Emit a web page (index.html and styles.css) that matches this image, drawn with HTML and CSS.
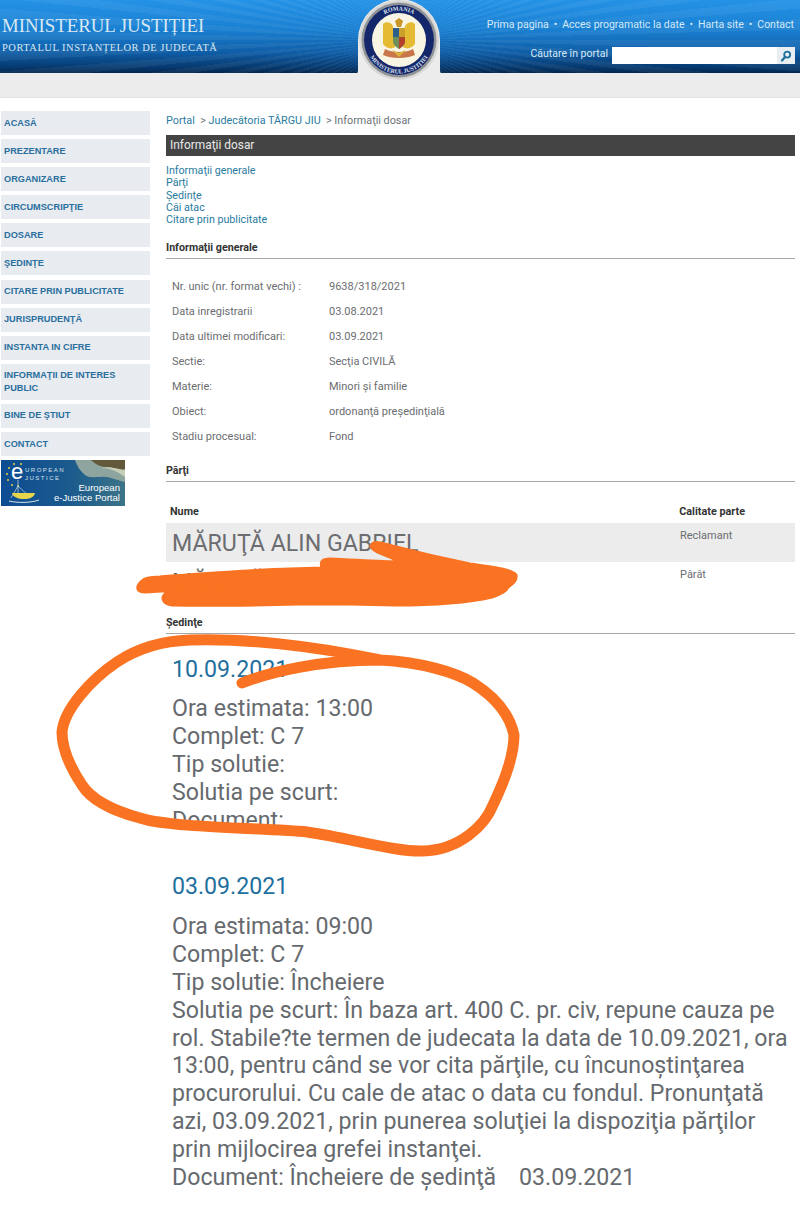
FILE: index.html
```html
<!DOCTYPE html>
<html lang="ro">
<head>
  <meta charset="UTF-8">
  <title>Informații dosar</title>
  <meta name="viewport" content="width=device-width, initial-scale=1.0">
  <link rel="stylesheet" href="styles.css">
</head>
<body>

  <header class="site-header">
    <div class="banner">
      <div class="brand">
        <div class="brand-title">MINISTERUL JUSTIȚIEI</div>
        <div class="brand-sub">PORTALUL INSTANȚELOR DE JUDECATĂ</div>
      </div>
      <div class="banner-right">
        <nav class="top-links">
          <a>Prima pagina</a><span>•</span><a>Acces programatic la date</a><span>•</span><a>Harta site</a><span>•</span><a>Contact</a>
        </nav>
        <div class="search-row">
          <span>Căutare în portal</span>
          <div class="search-box">
            <div class="search-btn">
              <svg width="12" height="12" viewBox="0 0 12 12"><circle cx="7.2" cy="4.6" r="3" fill="none" stroke="#1f6e9c" stroke-width="1.8"/><path d="M5 7L2 10.5" stroke="#1f6e9c" stroke-width="2.2" stroke-linecap="round"/></svg>
            </div>
          </div>
        </div>
      </div>
    </div>
    <div class="seal">
      <svg width="90" height="84" viewBox="0 0 90 84">
        <path d="M0 74Q3 74 3 70V40A41 41 0 0 1 85 40V70Q85 74 88 74z" fill="#ececec"/>
        <circle cx="44" cy="40" r="40" fill="#d8d9d6"/>
        <circle cx="44" cy="40" r="37.5" fill="#8f9296"/>
        <circle cx="44" cy="40" r="35" fill="#14276b"/>
        <circle cx="44" cy="40" r="27" fill="#f9f5e4"/>
        <!-- eagle wings, head, shield and ribbon -->
        <path d="M28 24c3-3 8-2 10 2l2 21c-4 3-9 1-12-3z" fill="#e6bb34"/>
        <path d="M60 24c-3-3-8-2-10 2l-2 21c4 3 9 1 12-3z" fill="#e6bb34"/>
        <path d="M40 21l4-3 4 3-2 6h-4z" fill="#c9962a"/>
        <path d="M38 28h12v13c0 4-3 6-6 8-3-2-6-4-6-8z" fill="#6f8f5a"/>
        <path d="M38 28h6v9h-6z" fill="#2d5f8a"/>
        <path d="M44 37h6v5c0 2-3 5-6 7z" fill="#b3402c"/>
        <path d="M44 28h6v9h-6z" fill="#c9a12a"/>
        <path d="M30 49c6 4 22 4 28 0l2 6c-8 4-24 4-32 0z" fill="#c9764a"/>
        <path d="M37 50l7 7 7-7-7 3z" fill="#d9b53c"/>
        <path id="sealTop" d="M14.5 40a29.5 29.5 0 0 1 59 0" fill="none"/>
        <text class="seal-text" text-anchor="middle"><textPath href="#sealTop" startOffset="50%">ROMANIA</textPath></text>
        <path id="sealBottom" d="M10.5 40a33.5 33.5 0 0 0 67 0" fill="none"/>
        <text class="seal-text" text-anchor="middle"><textPath href="#sealBottom" startOffset="50%">MINISTERUL JUSTIȚIEI</textPath></text>
      </svg>
    </div>
  </header>

  <div class="page">
    <aside class="sidebar">
      <a class="side-item">ACASĂ</a>
      <a class="side-item">PREZENTARE</a>
      <a class="side-item">ORGANIZARE</a>
      <a class="side-item">CIRCUMSCRIPŢIE</a>
      <a class="side-item">DOSARE</a>
      <a class="side-item">ŞEDINŢE</a>
      <a class="side-item">CITARE PRIN PUBLICITATE</a>
      <a class="side-item">JURISPRUDENŢĂ</a>
      <a class="side-item">INSTANTA IN CIFRE</a>
      <a class="side-item tall">INFORMAŢII DE INTERES PUBLIC</a>
      <a class="side-item">BINE DE ŞTIUT</a>
      <a class="side-item">CONTACT</a>
      <div class="ejustice">
        <svg class="ejustice-art" width="124" height="46" viewBox="0 0 124 46">
          <defs>
            <linearGradient id="ejBg" x1="0" y1="0" x2="1" y2="0">
              <stop offset="0" stop-color="#0d4c92"/>
              <stop offset="0.55" stop-color="#1b5a8c"/>
              <stop offset="1" stop-color="#3c7488"/>
            </linearGradient>
          </defs>
          <rect width="124" height="46" fill="url(#ejBg)"/>
          <path d="M74 0h50v22c-10-2-16-6-24-5-8 0-12 1-16-2-5-4-8-9-10-15z" fill="#8ea59f"/>
          <path d="M90 0h34v9c-6 3-11 0-15-2-7 1-14-2-19-7z" fill="#62583a"/>
          <path d="M100 8c8 0 16 3 24 9v-7c-8-1-16-4-24-2z" fill="#c7ceb8"/>
          <g fill="#f0d23c">
            <circle cx="6" cy="14" r="1"/><circle cx="8" cy="8" r="1"/><circle cx="13" cy="4" r="1"/>
            <circle cx="20" cy="4" r="1"/><circle cx="7" cy="20" r="1"/><circle cx="11" cy="25" r="1"/>
            <circle cx="17" cy="26" r="1"/>
          </g>
          <path d="M17 26L10 38M17 26L30 38M17 20V36" stroke="#c9dbe6" stroke-width=".7" fill="none"/>
          <path d="M11 33h23c-1 4-5 6-11 6s-11-2-12-6z" fill="#e8d54a"/>
          <path d="M8 41c8 2 22 2 30-1" stroke="#d7e4ea" fill="none"/>
        </svg>
        <span class="ej-e">e</span>
        <span class="ej-small">UROPEAN<br>JUSTICE</span>
        <span class="ej-label">European<br>e-Justice Portal</span>
      </div>
    </aside>

    <main class="content">
      <div class="breadcrumb"><a>Portal</a> &nbsp;&gt; <a>Judecătoria TÂRGU JIU</a> &nbsp;&gt; Informaţii dosar</div>
      <h1 class="title-bar">Informaţii dosar</h1>

      <div class="anchors">
        <a>Informaţii generale</a>
        <a>Părţi</a>
        <a>Şedinţe</a>
        <a>Căi atac</a>
        <a>Citare prin publicitate</a>
      </div>

      <h2 class="section-head first">Informaţii generale</h2>
      <dl class="info">
        <div class="info-row"><dt>Nr. unic (nr. format vechi) :</dt><dd>9638/318/2021</dd></div>
        <div class="info-row"><dt>Data inregistrarii</dt><dd>03.08.2021</dd></div>
        <div class="info-row"><dt>Data ultimei modificari:</dt><dd>03.09.2021</dd></div>
        <div class="info-row"><dt>Sectie:</dt><dd>Secţia CIVILĂ</dd></div>
        <div class="info-row"><dt>Materie:</dt><dd>Minori şi familie</dd></div>
        <div class="info-row"><dt>Obiect:</dt><dd>ordonanţă preşedinţială</dd></div>
        <div class="info-row"><dt>Stadiu procesual:</dt><dd>Fond</dd></div>
      </dl>

      <h2 class="section-head">Părţi</h2>
      <div class="party-head"><span>Nume</span><span>Calitate parte</span></div>
      <div class="party-row shaded"><span class="party-name">MĂRUŢĂ ALIN GABRIEL</span><span class="party-role">Reclamant</span></div>
      <div class="party-row"><span class="party-name">MĂRUŢĂ</span><span class="party-role">Pârât</span></div>

      <h2 class="section-head hearings">Şedinţe</h2>

      <section class="hearing">
        <div class="hearing-date">10.09.2021</div>
        <p>Ora estimata: 13:00<br>Complet: C 7<br>Tip solutie:<br>Solutia pe scurt:<br>Document:</p>
      </section>

      <section class="hearing second">
        <div class="hearing-date">03.09.2021</div>
        <p>Ora estimata: 09:00<br>Complet: C 7<br>Tip solutie: Încheiere<br>Solutia pe scurt: În baza art. 400 C. pr. civ, repune cauza pe rol. Stabile?te termen de judecata la data de 10.09.2021, ora 13:00, pentru când se vor cita părţile, cu încunoştinţarea procurorului. Cu cale de atac o data cu fondul. Pronunţată azi, 03.09.2021, prin punerea soluţiei la dispoziţia părţilor prin mijlocirea grefei instanţei.<br>Document: Încheiere de şedinţă &nbsp;&nbsp; 03.09.2021</p>
      </section>
    </main>
  </div>

  <!-- marker scribbles on top of the photo -->
  <svg class="scribble" width="800" height="1207" viewBox="0 0 800 1207">
    <path class="marker-line" d="M242 683C270 672 320 660 380 660C420 662 455 672 473 683C495 697 510 715 514 735C514 760 500 790 493 805C485 825 460 850 423 851C395 852 350 838 307 832C270 828 170 828 140 818C110 810 90 798 82 785C72 770 62 750 62 732C64 710 90 680 117 662C135 650 160 641 190 640C240 638 310 645 380 660"/>
    <path class="marker-blob" d="M138 586C142 578 150 577 160 577C200 574 250 570 290 569L322 568C320 562 322 559 330 559C355 560 380 562 400 562C390 556 372 552 371 546C373 541 380 542 392 546C415 552 440 558 470 564C490 567 512 569 516 575C517 581 512 584 508 587C506 592 500 594 492 597C470 602 440 605 395 605L350 604L300 604C260 605 220 606 172 605C163 604 161 598 165 594C175 591 200 590 225 589C195 589 165 591 145 592C139 592 137 590 138 586z"/>
  </svg>

</body>
</html>
```

FILE: styles.css
```css
* { box-sizing: border-box; margin: 0; padding: 0; }

body {
  background: #fff;
  color: #6b6d70;
  font-family: Roboto, "Liberation Sans", sans-serif;
  font-size: 11px;
  position: relative;
  width: 800px;
  height: 1207px;
  overflow: hidden;
}

/* header */
.site-header { position: relative; height: 98px; background: #ececec; border-bottom: 1px solid #e2e2e2; }

.banner {
  height: 73px;
  display: flex;
  justify-content: space-between;
  background:
    repeating-conic-gradient(from 0deg at 400px 40px, rgba(255, 255, 255, 0.05) 0 1.5deg, rgba(255, 255, 255, 0) 1.5deg 3deg),
    linear-gradient(180deg, #2492e6 0%, #1a80d2 40%, #0f5da6 72%, #063a70 92%, #04264d 100%);
}

.brand { padding: 15px 0 0 2px; color: #d8e8f2; font-family: "Liberation Serif", serif; }
.brand-title { font-size: 18.8px; line-height: 22px; }
.brand-sub { font-size: 10.5px; letter-spacing: 0.5px; line-height: 14px; margin-top: 4px; }

.banner-right { padding: 18px 6px 0 0; color: #d5e9f6; display: flex; flex-direction: column; align-items: flex-end; font-size: 10.5px; }
.top-links { display: flex; gap: 5px; line-height: 14px; }
.search-row { display: flex; align-items: flex-start; gap: 4px; margin-top: 15px; line-height: 14px; }
.search-box { width: 183px; height: 17px; background: #fff; display: flex; justify-content: flex-end; margin-right: -1px; }
.search-btn { width: 18px; background: #e8eef2; display: flex; align-items: center; justify-content: center; }

.seal { position: absolute; left: 355px; top: 0; width: 90px; height: 84px; }
.seal svg { display: block; }
.seal-text { font-size: 6px; fill: #dfe4ee; font-family: "Liberation Serif", serif; font-weight: bold; }

/* layout */
.page { display: flex; padding-top: 13px; }
.sidebar { width: 166px; flex: none; padding-left: 1px; }
.content { width: 629px; }

/* left menu */
.side-item {
  display: flex;
  align-items: center;
  width: 149px;
  min-height: 24px;
  margin-bottom: 4.1px;
  padding: 0 3px;
  background: #e8ebf0;
  color: #2a6f9e;
  font-family: "Liberation Sans", sans-serif;
  font-size: 9.2px;
  font-weight: bold;
  line-height: 13px;
}
.side-item.tall { min-height: 36px; padding-right: 20px; }

.ejustice { position: relative; width: 124px; height: 46px; margin-top: 4px; color: #fff; }
.ejustice-art { display: block; }
.ej-e { position: absolute; left: 10px; top: 0; font: 22px/24px "Liberation Sans", sans-serif; }
.ej-small { position: absolute; left: 24px; top: 6px; font: 6px/8px "Liberation Sans", sans-serif; letter-spacing: 1.5px; color: #d6e2ea; }
.ej-label { position: absolute; right: 5px; top: 23px; text-align: right; font: 9.6px/10px "Liberation Sans", sans-serif; }

/* main column */
.breadcrumb { height: 24px; padding-top: 3px; font-size: 10.8px; line-height: 14px; color: #6d7478; }
.breadcrumb a, .anchors a { color: #2a7ba0; }

.title-bar {
  height: 21px;
  padding-left: 4px;
  background: #444;
  color: #e8e8e8;
  font-size: 11.9px;
  font-weight: normal;
  line-height: 21px;
}

.anchors { display: flex; flex-direction: column; padding-top: 9px; font-size: 10.7px; line-height: 12.3px; }

.section-head {
  color: #333;
  font-size: 10.7px;
  font-weight: bold;
  line-height: 14px;
  padding-bottom: 3px;
  border-bottom: 1px solid #a8a8a8;
}
.section-head.first { margin-top: 15px; }

.info { padding: 20px 0 10px; }
.info-row { display: flex; height: 25px; line-height: 14px; padding-top: 1px; }
.info-row dt { width: 163px; padding-left: 6px; }

.party-head { display: flex; justify-content: space-between; padding: 23px 50px 0 4px; height: 41px; color: #333; font-weight: bold; font-size: 10.8px; }
.party-row { display: flex; height: 39px; }
.party-row.shaded { background: #ececec; }
.party-name { width: 514px; padding: 7px 0 0 6px; font-size: 23.2px; line-height: 26px; }
.party-role { padding-top: 6px; line-height: 14px; }

.section-head.hearings { margin-top: 15px; }

.hearing { padding: 21px 0 0 6px; color: #666a6e; font-size: 23.15px; line-height: 27.8px; }
.hearing.second { padding-top: 38px; padding-right: 5px; }
.hearing-date { color: #1f6f9e; line-height: 30px; margin-bottom: 10px; }
.hearing.second .hearing-date { margin-bottom: 11px; }

/* marker drawn over the page */
.scribble { position: absolute; left: 0; top: 0; pointer-events: none; }
.marker-line { fill: none; stroke: #f97322; stroke-width: 11; stroke-linecap: round; stroke-linejoin: round; }
.marker-blob { fill: #f97322; stroke: #f97322; stroke-width: 3; stroke-linejoin: round; }
```
